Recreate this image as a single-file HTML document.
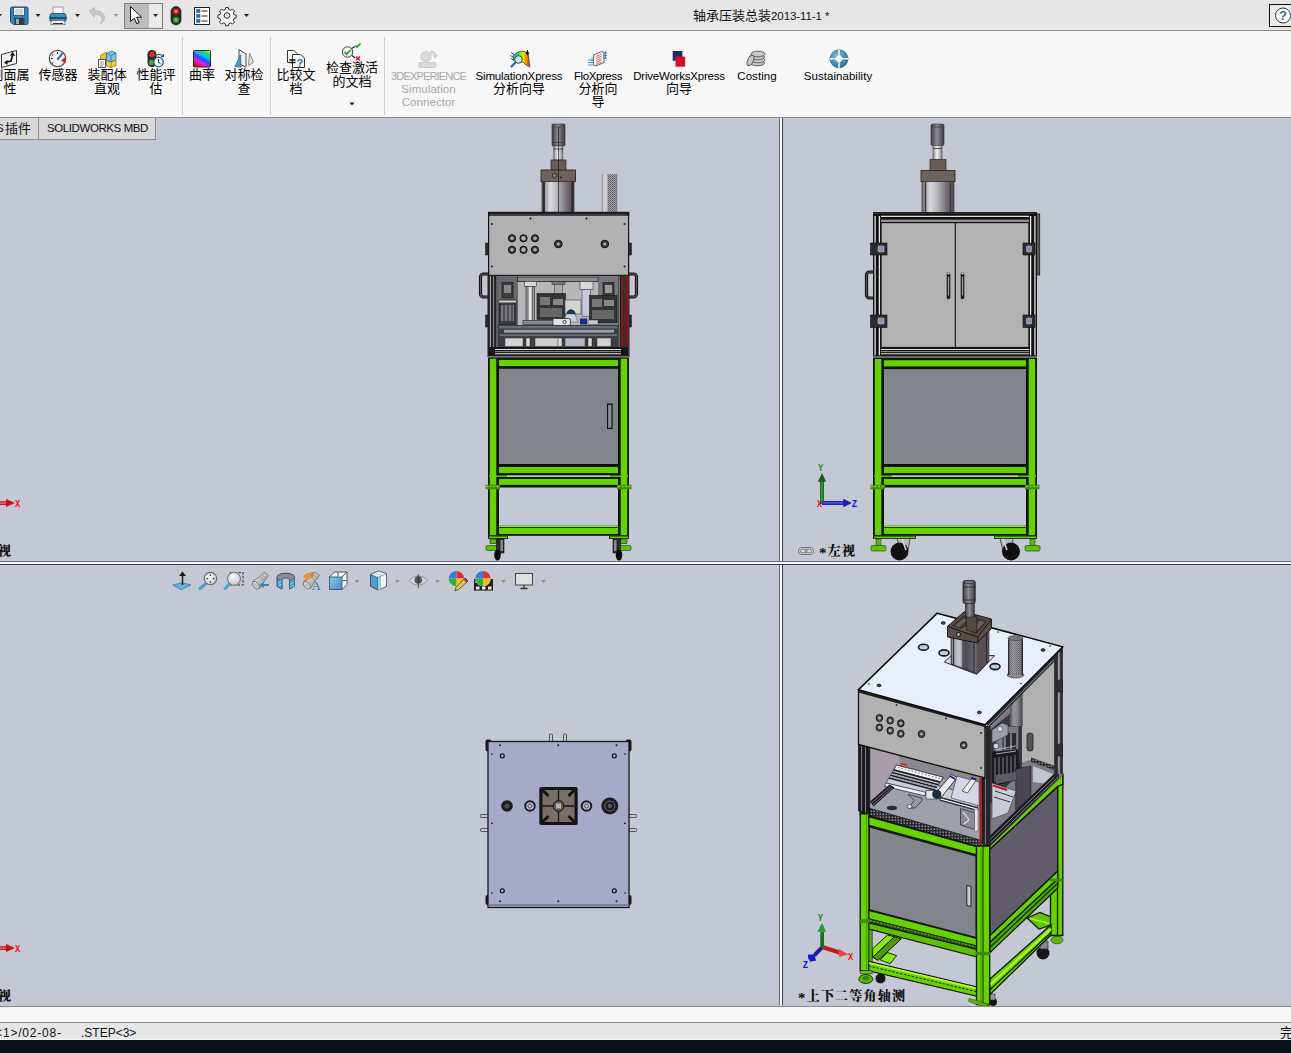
<!DOCTYPE html>
<html lang="zh">
<head>
<meta charset="utf-8">
<title>SOLIDWORKS</title>
<style>
*{box-sizing:border-box;margin:0;padding:0}
html,body{width:1291px;height:1053px;overflow:hidden;background:#c4c8d4;font-family:"Liberation Sans","Noto Sans CJK SC",sans-serif;}
#app{position:relative;width:1291px;height:1053px;overflow:hidden;background:#c4c8d4}
.abs{position:absolute}
#titlebar{left:0;top:0;width:1291px;height:30px;background:#e6e6e6}
#titleline{left:0;top:30px;width:1291px;height:1px;background:#8c8c8c}
#ribbon{left:0;top:31px;width:1291px;height:86px;background:#f7f7f7}
#ribline{left:0;top:117px;width:1291px;height:1px;background:#8a8a8a}
#title{left:693px;top:8px;font-size:13px;line-height:16px;color:#111;white-space:nowrap}
.rb{position:absolute;text-align:center;color:#000;font-size:13px;line-height:13.5px;white-space:nowrap;transform:translateX(-50%)}
.rb.en{font-size:11.5px;line-height:13px}
.rb.en .cn{font-size:13px;line-height:12.5px;letter-spacing:0;display:block}
.rb.dis{color:#a8a8a8}
.vsep{position:absolute;top:37px;width:1px;height:78px;background:#cfcfcf}
.tab{position:absolute;top:118px;height:22px;background:#d9d9d9;border-bottom:1px solid #8a8a8a;border-right:1px solid #8a8a8a;font-size:11.5px;line-height:21px;letter-spacing:-0.41px;color:#111;white-space:nowrap}
#bot1{left:0;top:1006px;width:1291px;height:1px;background:#8a8a8a}
#bot2{left:0;top:1007px;width:1291px;height:15px;background:#f7f7f7}
#bot3{left:0;top:1022px;width:1291px;height:1px;background:#8a8a8a}
#status{left:0;top:1023px;width:1291px;height:17px;background:#e6e6e6;font-size:12px;line-height:17px;color:#111}
#taskbar{left:0;top:1040px;width:1291px;height:13px;background:#0d121b}
.vl{position:absolute;font-family:"Liberation Serif","Noto Serif CJK SC",serif;font-weight:900;font-size:13px;line-height:14px;color:#111;white-space:nowrap;letter-spacing:1.2px}
.st{position:relative;top:2.500px;font-size:15px;line-height:10px}
svg{position:absolute;left:0;top:0;overflow:visible}
</style>
</head>
<body>
<div id="app">
<!--VP-START--><svg width="1291" height="1053" viewBox="0 0 1291 1053"><defs>
<linearGradient id="gNut" x1="0" y1="0" x2="1" y2="0"><stop offset="0" stop-color="#3c3c40"/><stop offset=".45" stop-color="#8c8c92"/><stop offset="1" stop-color="#3a3a3e"/></linearGradient>
<linearGradient id="gRod" x1="0" y1="0" x2="1" y2="0"><stop offset="0" stop-color="#8a8a8e"/><stop offset=".45" stop-color="#f2f2f4"/><stop offset="1" stop-color="#86868a"/></linearGradient>
<linearGradient id="gCyl" x1="0" y1="0" x2="1" y2="0"><stop offset="0" stop-color="#6e6a6c"/><stop offset=".25" stop-color="#dcdce0"/><stop offset=".5" stop-color="#b0b0b6"/><stop offset=".8" stop-color="#6e666c"/><stop offset="1" stop-color="#544c52"/></linearGradient><linearGradient id="gCylI" x1="0" y1="0" x2="1" y2="0"><stop offset="0" stop-color="#8e8e96"/><stop offset=".2" stop-color="#c8c8d0"/><stop offset=".32" stop-color="#9a9aa2"/><stop offset=".36" stop-color="#46464c"/><stop offset=".66" stop-color="#6e6e76"/><stop offset=".7" stop-color="#584e56"/><stop offset="1" stop-color="#5c525a"/></linearGradient>
<linearGradient id="gCol" x1="0" y1="0" x2="1" y2="0"><stop offset="0" stop-color="#4e4e52"/><stop offset=".35" stop-color="#a4a4a8"/><stop offset="1" stop-color="#46464a"/></linearGradient>
<pattern id="pHatch" width="2" height="2" patternUnits="userSpaceOnUse"><rect width="2" height="2" fill="#a4a4a4"/><rect width="1" height="1" fill="#5a5a5a"/><rect x="1" y="1" width="1" height="1" fill="#6e6e6e"/></pattern>
<pattern id="pProf" width="3.300" height="4" patternUnits="userSpaceOnUse"><rect width="3.300" height="4" fill="#1e1e22"/><rect x="1.500" width="1" height="4" fill="#a8a8ac"/></pattern>
<pattern id="pDots" width="3" height="3" patternUnits="userSpaceOnUse"><rect width="3" height="3" fill="#2a2a2c"/><rect x=".5" y=".5" width="1.500" height="1.500" fill="#8a8a8e"/></pattern>
</defs>
<g id="front" shape-rendering="auto">
<!-- cylinder on top -->
<rect x="552" y="124" width="13" height="22" rx="1" fill="url(#gNut)" stroke="#333" stroke-width=".6"/>
<path d="M552.500 127h12M552.500 142.500h12" stroke="#333" stroke-width=".7"/>
<rect x="553.800" y="146" width="9" height="14" fill="url(#gRod)" stroke="#444" stroke-width=".6"/>
<path d="M553.500 149h10" stroke="#333" stroke-width=".8"/>
<rect x="551" y="160" width="15" height="10.500" fill="#6a5c54" stroke="#2a2624" stroke-width=".7"/>
<rect x="541" y="170" width="34.500" height="11.500" fill="#6e625a" stroke="#2a2624" stroke-width=".9"/>
<circle cx="554.500" cy="175.500" r="2.200" fill="#8a7e76" stroke="#1a1816" stroke-width=".8"/>
<circle cx="561" cy="177.500" r="1" fill="#222"/>
<rect x="542" y="181.500" width="32" height="31" fill="url(#gCyl)" stroke="#333" stroke-width=".7"/>
<path d="M543.800 182v30M572.500 182v30" stroke="#2e2a2a" stroke-width="2.200"/><path d="M558.500 127v85" stroke="#1a1a1a" stroke-width=".7"/>
<!-- side column -->
<rect x="602.300" y="174.200" width="14.500" height="38.300" fill="#cdcdcd"/>
<rect x="607.500" y="174.200" width="9.300" height="38.300" fill="url(#pHatch)"/><path d="M602.300 174.200v38M616.800 174.200v38" stroke="#666" stroke-width=".6"/>
<!-- upper panel -->
<rect x="488.600" y="212.400" width="140" height="63" fill="#b1b1b1" stroke="#101010" stroke-width="1.200"/>
<rect x="488" y="212" width="141.200" height="3.700" fill="#1a1a1e"/><path d="M490 214.300h137" stroke="#4a4c56" stroke-width=".8"/>
<g fill="#3a3a3a" stroke="#0e0e0e" stroke-width="1">
<circle cx="512" cy="238.300" r="3.600"/><circle cx="523.500" cy="238.300" r="3.600"/><circle cx="535" cy="238.300" r="3.600"/>
<circle cx="512" cy="249.800" r="3.600"/><circle cx="523.500" cy="249.800" r="3.600"/><circle cx="535" cy="249.800" r="3.600"/>
<circle cx="558.300" cy="244" r="3.800"/><circle cx="604.800" cy="244" r="3.800"/>
</g>
<g fill="#b0b0b0"><circle cx="512" cy="238.300" r="1.800"/><circle cx="523.500" cy="238.300" r="2.200"/><circle cx="535" cy="238.300" r="1.800"/><circle cx="512" cy="249.800" r="1.800"/><circle cx="523.500" cy="249.800" r="2.200"/><circle cx="535" cy="249.800" r="1.800"/><circle cx="558.300" cy="244" r="1.600"/><circle cx="604.800" cy="244" r="1.600"/></g>
<g fill="#1a1a1a"><circle cx="492" cy="224" r="1"/><circle cx="624.500" cy="224" r="1"/><circle cx="492" cy="266.500" r="1"/><circle cx="624.500" cy="266.500" r="1"/><circle cx="530.500" cy="218.500" r="1"/><circle cx="586.500" cy="218.500" r="1"/></g>
<!-- side hinges on panel -->
<rect x="485.500" y="243" width="3" height="12" fill="#2a2a2c" stroke="#111" stroke-width=".5"/>
<rect x="628.500" y="243" width="3" height="12" fill="#2a2a2c" stroke="#111" stroke-width=".5"/>
<!-- handles -->
<path d="M488 274h-4.500a3 3 0 0 0-3 3v17a3 3 0 0 0 3 3h4.500" fill="none" stroke="#141414" stroke-width="3.200"/>
<path d="M488 274h-4.500a3 3 0 0 0-3 3v17a3 3 0 0 0 3 3h4.500" fill="none" stroke="#5a5a5e" stroke-width="1.100"/>
<path d="M629 274h4.500a3 3 0 0 1 3 3v17a3 3 0 0 1-3 3h-4.500" fill="none" stroke="#141414" stroke-width="3.200"/>
<path d="M629 274h4.500a3 3 0 0 1 3 3v17a3 3 0 0 1-3 3h-4.500" fill="none" stroke="#5a5a5e" stroke-width="1.100"/>
<rect x="485.500" y="315" width="3" height="12" fill="#2a2a2c" stroke="#111" stroke-width=".5"/>
<rect x="628.500" y="315" width="3" height="12" fill="#2a2a2c" stroke="#111" stroke-width=".5"/>
<!-- interior -->
<rect x="488" y="275.500" width="141" height="81" fill="#b7b7ba"/>
<rect x="488" y="275.500" width="10" height="81" fill="url(#pProf)"/>
<rect x="618" y="275.500" width="11" height="81" fill="url(#pProf)"/>
<rect x="621.800" y="275.500" width="1.600" height="80" fill="#a80c0c"/><rect x="623.400" y="275.500" width="2.800" height="80" fill="#3a3030"/><rect x="626.200" y="275.500" width="1.900" height="80" fill="#9a0c0c"/>
<rect x="498" y="276" width="20" height="50" fill="#6a6a6e"/>
<rect x="598" y="276" width="20" height="50" fill="#77777b"/>
<rect x="517.500" y="277" width="80.500" height="4.500" fill="#8c8c90" stroke="#222" stroke-width=".8"/>
<rect x="502" y="282.500" width="11" height="15.500" fill="#3c3c3e" stroke="#111" stroke-width=".6"/>
<rect x="504" y="285" width="7" height="8" fill="#8a8a8a"/>
<rect x="499" y="300" width="17" height="25" fill="#3a3a3e" stroke="#111" stroke-width=".6"/>
<rect x="501" y="305" width="13" height="16" fill="#77777b"/><path d="M504 305v16M508 305v16M512 305v16" stroke="#2a2a2e" stroke-width="1"/><rect x="499" y="300.500" width="17" height="2" fill="#d8d0c8"/>
<rect x="603" y="282.500" width="11" height="15.500" fill="#3c3c3e" stroke="#111" stroke-width=".6"/>
<rect x="605" y="285" width="7" height="8" fill="#9a9a9a"/>
<rect x="524.500" y="281.500" width="12" height="5" fill="#d8d8d8" stroke="#333" stroke-width=".6"/>
<rect x="526" y="286.500" width="8.500" height="34.500" fill="url(#gRod)" stroke="#333" stroke-width=".6"/>
<path d="M528 287v34M532.500 287v34" stroke="#222" stroke-width=".6"/>
<rect x="580" y="281.500" width="13" height="8" fill="#d8d8d8" stroke="#333" stroke-width=".6"/>
<rect x="582" y="289.500" width="8.500" height="27" fill="#c6c6e0" stroke="#444" stroke-width=".6"/>
<rect x="552" y="281.500" width="13" height="3" fill="#777" stroke="#222" stroke-width=".5"/>
<rect x="554.500" y="284.500" width="8" height="10" fill="#aaa" stroke="#333" stroke-width=".5"/>
<rect x="537" y="293.500" width="28.500" height="26" fill="#343436" stroke="#111" stroke-width=".6"/>
<rect x="540" y="297" width="10" height="8" fill="#777"/><rect x="553" y="299" width="10" height="6" fill="#888"/><rect x="540" y="308" width="22" height="9" fill="#666"/>
<rect x="589.500" y="295.500" width="27.500" height="27" fill="#343436" stroke="#111" stroke-width=".6"/>
<rect x="592" y="299" width="10" height="8" fill="#777"/><rect x="604" y="300" width="10" height="6" fill="#888"/><rect x="592" y="310" width="22" height="9" fill="#666"/>
<rect x="565" y="300" width="16" height="14" fill="#d2d2d2" stroke="#444" stroke-width=".6"/>
<circle cx="571" cy="314" r="4.200" fill="#14364e" stroke="#0a1a26" stroke-width=".6"/>
<path d="M566 314l-2 8h14l-3-8z" fill="#c8d0e4" stroke="#556" stroke-width=".5"/>
<rect x="552.500" y="318.500" width="18" height="7" rx="2" fill="#e2e2e2" stroke="#222" stroke-width=".8"/>
<circle cx="564.500" cy="322" r="1.600" fill="#fff" stroke="#111" stroke-width=".8"/>
<rect x="580" y="318.500" width="7" height="6" fill="#1a2a8a"/><rect x="588" y="320" width="10" height="4.500" fill="#c8c8c8" stroke="#333" stroke-width=".5"/>
<rect x="523" y="320.500" width="30" height="4" fill="#8a8a8e" stroke="#222" stroke-width=".6"/>
<rect x="498" y="325" width="120" height="12" fill="#3c3e44"/>
<rect x="499" y="326" width="118" height="2.500" fill="#6a6c74"/>
<rect x="504" y="329.800" width="110" height="2.800" fill="#9c9eb4"/>
<rect x="500" y="334.300" width="117" height="1.800" fill="#70727a"/>
<rect x="498" y="337" width="120" height="10" fill="#3e3e42"/>
<rect x="505" y="338" width="18" height="8.500" fill="#d4d4d4" stroke="#333" stroke-width=".5"/>
<rect x="535" y="338" width="24" height="8.500" fill="#cfcfcf" stroke="#333" stroke-width=".5"/>
<rect x="565" y="338" width="20" height="8.500" fill="#b4b8c4" stroke="#333" stroke-width=".5"/>
<rect x="597" y="338" width="14" height="8.500" fill="#d4d4d4" stroke="#333" stroke-width=".5"/>
<rect x="526" y="338" width="4" height="8.500" fill="#ddd" stroke="#222" stroke-width=".5"/><rect x="558" y="338" width="4" height="8.500" fill="#ddd" stroke="#222" stroke-width=".5"/><rect x="588" y="338" width="4" height="8.500" fill="#ddd" stroke="#222" stroke-width=".5"/>
<rect x="489" y="347" width="139" height="9" fill="#161618"/>
<path d="M495 349.500h126M495 353.800h126" stroke="#e6e6e6" stroke-width="1.100"/><path d="M495 351.600h126" stroke="#9a9a9a" stroke-width=".9"/>
<rect x="488" y="275.500" width="141" height="81" fill="none" stroke="#1e1e1e" stroke-width="1"/>
<!-- green frame -->
<rect x="488" y="355" width="141" height="1.200" fill="#1a1a1a"/>
<rect x="488" y="356" width="141" height="2" fill="#6c7078"/>
<rect x="488" y="357.7" width="141" height="178.09999999999997" fill="#0c1602"/>
<rect x="499" y="487.500" width="119" height="38.200" fill="#c4c8d4"/>
<rect x="489.8" y="358.7" width="6.500" height="176.3" fill="#68d200"/>
<rect x="620.7" y="358.7" width="6.500" height="176.3" fill="#68d200"/>
<rect x="499" y="359.9" width="119" height="6.200" fill="#68d200"/>
<rect x="499" y="368.8" width="119" height="95.2" fill="#82868c"/>
<rect x="499" y="467" width="119" height="6.100" fill="#68d200"/>
<rect x="507" y="475.300" width="103" height="1.600" fill="#d4d8e0"/>
<rect x="489" y="475.500" width="18" height="1.400" fill="#68d200"/>
<rect x="610" y="475.500" width="18" height="1.400" fill="#68d200"/>
<rect x="499" y="478.900" width="119" height="6" fill="#68d200"/>
<rect x="499" y="525.700" width="119" height="1.300" fill="#8ee62a"/>
<rect x="499" y="527.800" width="119" height="6.200" fill="#68d200"/>
<path d="M485.5 487h14.500M617 487h14.500" stroke="#3f8a00" stroke-width="4.500"/>
<path d="M486 486.500h13M618 486.500h13" stroke="#7ae010" stroke-width="1.500" stroke-dasharray="2 1.500"/>
<rect x="607" y="403.500" width="5.600" height="25.500" fill="#0c0c0c"/><rect x="608.200" y="404.800" width="3.200" height="23" fill="#8e9298"/>
<!-- feet -->
<rect x="488" y="535.800" width="20" height="3" fill="#0c1602"/><rect x="489" y="536.500" width="18" height="1.500" fill="#68d200"/>
<rect x="609" y="535.800" width="20" height="3" fill="#0c1602"/><rect x="610" y="536.500" width="18" height="1.500" fill="#68d200"/>
<rect x="490" y="539" width="6.500" height="4.500" fill="#5ab800" stroke="#16280a" stroke-width=".6"/>
<rect x="486" y="545.500" width="14.500" height="5" rx="1.500" fill="#5cc400" stroke="#284a0a" stroke-width=".7"/>
<rect x="620.500" y="539" width="6.500" height="4.500" fill="#5ab800" stroke="#16280a" stroke-width=".6"/>
<rect x="616.500" y="545.500" width="14.500" height="5" rx="1.500" fill="#5cc400" stroke="#284a0a" stroke-width=".7"/>
<rect x="496.500" y="539" width="7.500" height="14" fill="#2a2a2c" stroke="#111" stroke-width=".6"/><rect x="500.500" y="540" width="2.500" height="11" fill="#8a8890"/>
<ellipse cx="497.500" cy="555" rx="3.300" ry="5.500" fill="#0c0c0c"/>
<rect x="613" y="539" width="7.500" height="14" fill="#2a2a2c" stroke="#111" stroke-width=".6"/><rect x="614" y="540" width="2.500" height="11" fill="#8a8890"/>
<ellipse cx="619" cy="555" rx="3.300" ry="5.500" fill="#0c0c0c"/>
</g>
<g id="left">
<rect x="931" y="124" width="13" height="21.500" rx="1.500" fill="url(#gNut)" stroke="#333" stroke-width=".6"/>
<path d="M931.500 127h12" stroke="#333" stroke-width=".7"/>
<rect x="933" y="145.500" width="9" height="14.500" fill="url(#gRod)" stroke="#444" stroke-width=".6"/>
<path d="M933 148.500h9" stroke="#333" stroke-width=".8"/>
<rect x="930" y="159.500" width="16" height="11" fill="#6a5c54" stroke="#2a2624" stroke-width=".7"/>
<rect x="921" y="170.500" width="34" height="11" fill="#6e625a" stroke="#2a2624" stroke-width=".9"/>
<rect x="922" y="181.500" width="32" height="31" fill="url(#gCyl)" stroke="#333" stroke-width=".7"/>
<path d="M925.500 182v30M950.500 182v30" stroke="#3a3434" stroke-width="1.200"/>
<!-- cabinet -->
<rect x="1036" y="214" width="3.700" height="61" fill="#5a5a5e" stroke="#1a1a1a" stroke-width=".8"/>
<rect x="873" y="212" width="164" height="144.500" fill="#121212"/>
<path d="M873.500 213.200h163" stroke="#3c3e46" stroke-width="1"/>
<path d="M875.100 216v140M1034.900 216v140" stroke="#bcbcbc" stroke-width="1.600"/>
<path d="M879.400 216v140M1030.600 216v140" stroke="#e8e8e8" stroke-width="1.300"/>
<path d="M881 216.400h148" stroke="#e0e0e0" stroke-width="1.200"/>
<rect x="881" y="219.600" width="148" height="2.400" fill="#909090"/>
<rect x="881.700" y="223.200" width="146.600" height="123.700" fill="#b2b2b2"/>
<path d="M955.300 223v124" stroke="#111" stroke-width="1.100"/>
<path d="M881 349.500h148M881 353.700h148" stroke="#e4e4e4" stroke-width="1.100"/>
<path d="M881 351.600h148" stroke="#9a9a9a" stroke-width="1"/>
<!-- hinges -->
<g fill="#2c2c30" stroke="#0c0c0c" stroke-width=".6">
<rect x="870.500" y="243" width="16.500" height="12"/><rect x="870.500" y="315" width="16.500" height="12.500"/>
<rect x="1023" y="243" width="12" height="12"/><rect x="1023" y="315" width="12" height="12.500"/>
</g>
<g fill="#8a90b0" stroke="#ccd" stroke-width=".5"><rect x="878" y="246" width="6" height="6" rx="1"/><rect x="878" y="318" width="6" height="6" rx="1"/><rect x="1026.500" y="246" width="5" height="6" rx="1"/><rect x="1026.500" y="318" width="5" height="6" rx="1"/></g>
<!-- left handle -->
<path d="M873 272h-3.500a3 3 0 0 0-3 3v20a3 3 0 0 0 3 3h3.500" fill="none" stroke="#141414" stroke-width="3.200"/>
<path d="M873 272h-3.500a3 3 0 0 0-3 3v20a3 3 0 0 0 3 3h3.500" fill="none" stroke="#5a5a5e" stroke-width="1"/>
<!-- door handles -->
<g stroke="#1a1a1a" stroke-width="3.600" stroke-linecap="round"><path d="M948.500 274v23.500M962.500 274v23.500"/></g>
<g stroke="#a0a0a4" stroke-width="1.200" stroke-linecap="round"><path d="M948.500 277v18M962.500 277v18"/></g>
<circle cx="948.500" cy="273.500" r="1.100" fill="#e4e4e4"/><circle cx="962.500" cy="273.500" r="1.100" fill="#e4e4e4"/>
<!-- green frame -->
<rect x="873" y="355.3" width="164" height="1.200" fill="#1a1a1a"/>
<rect x="873" y="356.3" width="164" height="2" fill="#6c7078"/>
<rect x="873" y="358.0" width="164" height="177.79999999999995" fill="#0c1602"/>
<rect x="884" y="487.500" width="142" height="38.200" fill="#c4c8d4"/>
<rect x="874.8" y="359.0" width="6.500" height="176.0" fill="#68d200"/>
<rect x="1028.7" y="359.0" width="6.500" height="176.0" fill="#68d200"/>
<rect x="884" y="360.2" width="142" height="6.200" fill="#68d200"/>
<rect x="884" y="369.1" width="142" height="94.89999999999999" fill="#82868c"/>
<rect x="884" y="467" width="142" height="6.100" fill="#68d200"/>
<rect x="892" y="475.300" width="126" height="1.600" fill="#d4d8e0"/>
<rect x="874" y="475.500" width="18" height="1.400" fill="#68d200"/>
<rect x="1018" y="475.500" width="18" height="1.400" fill="#68d200"/>
<rect x="884" y="478.900" width="142" height="6" fill="#68d200"/>
<rect x="884" y="525.700" width="142" height="1.300" fill="#8ee62a"/>
<rect x="884" y="527.800" width="142" height="6.200" fill="#68d200"/>
<path d="M870.5 487h14.500M1025 487h14.500" stroke="#3f8a00" stroke-width="4.500"/>
<path d="M871 486.500h13M1026 486.500h13" stroke="#7ae010" stroke-width="1.500" stroke-dasharray="2 1.500"/>
<!-- feet and wheels -->
<rect x="873" y="535.800" width="43" height="3" fill="#0c1602"/><rect x="874" y="536.500" width="41" height="1.500" fill="#68d200"/>
<rect x="994" y="535.800" width="43" height="3" fill="#0c1602"/><rect x="995" y="536.500" width="41" height="1.500" fill="#68d200"/>
<rect x="876" y="539" width="5" height="6.500" fill="#5ab800" stroke="#16280a" stroke-width=".5"/>
<rect x="871" y="545.500" width="15" height="5.500" rx="1.500" fill="#5cc400" stroke="#284a0a" stroke-width=".7"/>
<rect x="1030" y="539" width="5" height="6.500" fill="#5ab800" stroke="#16280a" stroke-width=".5"/>
<rect x="1025" y="545.500" width="15" height="5.500" rx="1.500" fill="#5cc400" stroke="#284a0a" stroke-width=".7"/>
<path d="M897 538.500h13l-2 12h-8z" fill="#b8b8b8" stroke="#222" stroke-width=".7"/>
<circle cx="899.500" cy="551.500" r="9" fill="#101010"/>
<path d="M902 539l4 11" stroke="#ddd" stroke-width="1.500"/>
<path d="M1000 538.500h13l-1 12h-9z" fill="#b8b8b8" stroke="#222" stroke-width=".7"/>
<circle cx="1011" cy="551.500" r="9" fill="#101010"/>
<path d="M1003 539l4 11" stroke="#ddd" stroke-width="1.500"/>
<!-- triad -->
<text x="819.600" y="507" font-family="Liberation Mono, monospace" font-weight="bold" font-size="11" fill="#f01010" text-anchor="middle" textLength="5" lengthAdjust="spacingAndGlyphs">X</text>
<rect x="820" y="481" width="4" height="23" fill="#1e6e22"/><rect x="821.300" y="481" width="1.300" height="22" fill="#4a9a4a"/>
<path d="M817.800 481.800l4.200-8.800 4.200 8.800z" fill="#1a5e1e"/>
<rect x="822" y="501" width="22" height="4" fill="#2222c8"/><rect x="823" y="502.300" width="21" height="1.300" fill="#5a5ae0"/>
<path d="M843.300 498.800l8.600 4.200-8.600 4.200z" fill="#1a1ab8"/>
<text x="820.600" y="470.700" font-family="Liberation Mono, monospace" font-weight="bold" font-size="11" fill="#128a22" text-anchor="middle" textLength="5.300" lengthAdjust="spacingAndGlyphs">Y</text>
<text x="854.500" y="506.700" font-family="Liberation Mono, monospace" font-weight="bold" font-size="11" fill="#1414f0" text-anchor="middle" textLength="5.300" lengthAdjust="spacingAndGlyphs">Z</text>
<!-- link icon -->
<rect x="798.500" y="547.500" width="15" height="7" rx="3.500" fill="#d8d8dc" stroke="#6a6460" stroke-width=".9"/>
<rect x="800.500" y="549.300" width="6.500" height="3.400" rx="1.700" fill="none" stroke="#6a6460" stroke-width=".8"/><rect x="805" y="549.300" width="6.500" height="3.400" rx="1.700" fill="none" stroke="#6a6460" stroke-width=".8"/>
</g>
<g id="top">
<!-- pins -->
<g fill="#c8c8c8" stroke="#222" stroke-width=".7">
<rect x="549.500" y="734" width="3" height="8" rx="1"/><rect x="563.500" y="734" width="3" height="8" rx="1"/>
<rect x="480.500" y="814.500" width="8" height="3" rx="1"/><rect x="480.500" y="828.500" width="8" height="3" rx="1"/>
<rect x="629" y="814.500" width="7.500" height="3" rx="1"/><rect x="629" y="828.500" width="7.500" height="3" rx="1"/>
</g>
<g fill="#1a1a1a"><rect x="485.500" y="739.500" width="6" height="12" rx="2"/><rect x="625.500" y="739.500" width="6" height="12" rx="2"/><rect x="485.500" y="895" width="6" height="10" rx="2"/><rect x="625.500" y="895" width="6" height="10" rx="2"/></g>
<rect x="488" y="741.500" width="141" height="166" fill="#a6aac8" stroke="#15151c" stroke-width="1.300"/>
<path d="M488 905h141" stroke="#777" stroke-width="1.500"/>
<rect x="539.300" y="787" width="38.400" height="38" rx="2" fill="#141414"/>
<rect x="542.500" y="790" width="32" height="32" fill="#7a6e66"/>
<path d="M558.500 790v32M542.500 806h32" stroke="#141414" stroke-width="1.300"/>
<path d="M542.500 790l6 6M574.500 790l-6 6M542.500 822l6-6M574.500 822l-6-6" stroke="#141414" stroke-width="3"/>
<circle cx="558.500" cy="806" r="5.500" fill="#5a5550" stroke="#141414" stroke-width="1"/>
<rect x="556" y="803.500" width="5" height="5" fill="#b4b4b8"/>
<circle cx="507" cy="806" r="5.800" fill="#1c1c20"/><circle cx="507" cy="806" r="2.500" fill="#4a4a50"/>
<circle cx="530" cy="806" r="4.800" fill="#b4b8d0" stroke="#1a1a1e" stroke-width="2"/><circle cx="530" cy="806" r="2" fill="none" stroke="#333" stroke-width=".7"/>
<circle cx="586.500" cy="806" r="4.800" fill="#b4b8d0" stroke="#1a1a1e" stroke-width="2"/><circle cx="586.500" cy="806" r="2" fill="none" stroke="#333" stroke-width=".7"/>
<circle cx="609.800" cy="806" r="8.500" fill="#1c1c20"/><circle cx="609.800" cy="806" r="5" fill="none" stroke="#6a6a72" stroke-width="1"/><circle cx="609.800" cy="806" r="2.300" fill="#55555c"/>
<g fill="#a6aac8" stroke="#15151c" stroke-width="1.200"><circle cx="502.300" cy="755.800" r="2"/><circle cx="614.300" cy="755.800" r="2"/><circle cx="502.300" cy="890.800" r="2"/><circle cx="614.300" cy="890.800" r="2"/></g>
<g fill="#15151c"><circle cx="500" cy="745.300" r="1"/><circle cx="558.300" cy="745.300" r="1"/><circle cx="616.500" cy="745.300" r="1"/><circle cx="500" cy="901.300" r="1"/><circle cx="558.300" cy="901.300" r="1"/><circle cx="616.500" cy="901.300" r="1"/><circle cx="492" cy="823.300" r=".9"/><circle cx="625" cy="823.300" r=".9"/><circle cx="492" cy="754" r=".8"/><circle cx="625" cy="754" r=".8"/><circle cx="492" cy="893" r=".8"/><circle cx="625" cy="893" r=".8"/></g>
<!-- left-edge triads -->
</g>
<g id="iso">
<!-- back/inside of lower frame seen through -->
<path d="M872.600 948.700l15-13.700 6.800 1.800-21.800 20.500z" fill="#84ec08" stroke="#0c1602" stroke-width="1"/>
<path d="M894.400 936.800l6.900 2.100-23.100 21.400-5.600-3z" fill="#4f9a00" stroke="#0c1602" stroke-width="1"/>
<path d="M880 959.800l7.600-7.200 9 3-6.400 8.100z" fill="#84ec08" stroke="#0c1602" stroke-width=".9"/>
<path d="M1027 918l13-5.500 11 4.500v8l-12 4z" fill="#63c400" stroke="#0c1602" stroke-width="1.200"/>
<path d="M1030 918.500l19 5" stroke="#a8f020" stroke-width="1.500"/>
<!-- wheels/feet back -->
<circle cx="1043" cy="953" r="6.500" fill="#161616"/><path d="M1040 941h8v8h-8z" fill="#888" stroke="#222" stroke-width=".6"/>
<ellipse cx="1057" cy="940" rx="6" ry="3.800" fill="#5ab800" stroke="#284a0a" stroke-width=".7"/>
<circle cx="880.500" cy="978.500" r="5" fill="#161616"/>
<circle cx="993" cy="1002" r="4" fill="#161616"/><rect x="989" y="994" width="6" height="6" fill="#999" stroke="#222" stroke-width=".5"/>
<!-- back-right leg -->
<path d="M1050.500 775h12.300v160.500h-12.300z" fill="#68d200" stroke="#0c1602" stroke-width="1.300"/>
<path d="M1057.500 786v149" stroke="#0c1602" stroke-width="1.200"/>
<!-- side bottom beam -->
<path d="M989.700 979.300l61.300-54.500v10.200l-61.300 59.600z" fill="#68d200" stroke="#0c1602" stroke-width="1.300"/>
<path d="M989.700 985l61.300-56" stroke="#b4f830" stroke-width="2.200"/>
<path d="M989.700 990l61.300-57.500" stroke="#0c1602" stroke-width="1.200"/>
<!-- side door -->
<path d="M989.300 849.700l68.400-63.300v84.600l-68 64.800z" fill="#605c6c" stroke="#0c1602" stroke-width="1.300"/>
<!-- side beams under door -->
<path d="M989.700 935.800l68.200-64.800v7.700l-68.200 64z" fill="#68d200" stroke="#0c1602" stroke-width="1.200"/>
<path d="M989.700 942.700l68.200-64v9.300l-68.200 64.900z" fill="#4faa00" stroke="#0c1602" stroke-width="1.200"/>
<path d="M989.700 947.500l68.200-64.500" stroke="#16280a" stroke-width="1.200"/>
<!-- side top green beam -->
<path d="M986.800 848l76-73.600v10l-5.100 2-68.400 63.300z" fill="#68d200" stroke="#0c1602" stroke-width="1.300"/>
<!-- upper cabinet: interior floor + walls -->
<path d="M858.500 744.500l124.500 33.500v66l-124.500-36z" fill="#9ea2a8"/>
<path d="M869.700 748l30 7.600v30l-30 22z" fill="#a89ea8"/>
<path d="M899.600 755.600l83 22v12l-83-22z" fill="#8c8890"/>
<!-- internals (rails etc.) -->
<path d="M886 783l10.500-18 47 12.500-6 8 28 8 12 4v10l-14-4-48-13z" fill="#c9cdda" stroke="#333" stroke-width=".7"/>
<path d="M896.500 765l46.500 12.200-2.500 4.500-46.500-12.200z" fill="#f4f4f8" stroke="#222" stroke-width=".7"/>
<path d="M898 767.500l43 11.300" stroke="#55555a" stroke-width=".8" stroke-dasharray="1.500 2"/>
<path d="M893.500 770l46.500 12.300M892 772.500l46.500 12.300M890.500 775.300l46.500 12.300M889 778l46.500 12.300" stroke="#1e1e22" stroke-width="1.500"/>
<path d="M891.300 773.900l46.500 12.300M889.800 776.600l46.500 12.300" stroke="#9a9ca8" stroke-width="1"/>
<path d="M886 783l40 9.300-1.500 3.500-40-9.500z" fill="#eef0f8" stroke="#222" stroke-width=".7"/><path d="M940 797.500l38 10.500v3l-38-10.500z" fill="#eef0f8" stroke="#222" stroke-width=".7"/>
<path d="M901 763.500l6 1.600M899.500 765.500l5 1.400" stroke="#c01818" stroke-width="1.200"/>
<path d="M870 801.500l19.500-17 5 3-21 19z" fill="#1c1c20"/>
<path d="M871.500 803l19-16.500M873 805l19-17" stroke="#9a9aa0" stroke-width=".7"/>
<path d="M908 794.500l14 3.500v3l-7 7h-6.500l5.500-7.500z" fill="#9a94a0" stroke="#222" stroke-width=".7"/>
<ellipse cx="909.500" cy="806.500" rx="2.600" ry="2" fill="#d8d8dc" stroke="#222" stroke-width=".6"/>
<path d="M926 790.500h9l2 8.500h-11z" fill="#e4e4e6" stroke="#222" stroke-width=".6"/>
<path d="M933.500 795.500l18-21 5.500 3-17 21.500z" fill="#ececf0" stroke="#1a1a1a" stroke-width=".8"/>
<path d="M950 776l5 3" stroke="#1a1a8a" stroke-width="2"/>
<circle cx="936.800" cy="794.300" r="4.100" fill="#16303e" stroke="#0a141c" stroke-width=".8"/>
<path d="M957 776l22 6v24l-6-2-22-6z" fill="#d4d8e6" stroke="#333" stroke-width=".6"/>
<path d="M962 791l10-13 4.500 1.500-9 13.500z" fill="#f0f0f4" stroke="#222" stroke-width=".7"/>
<path d="M971 778l5 1.500" stroke="#1a1a8a" stroke-width="2"/>
<path d="M938 797l40 11M940 800l38 10.500" stroke="#222" stroke-width="1"/>
<path d="M960.500 808.500l14 4v17l-14-4.500z" fill="#8c8a94" stroke="#222" stroke-width=".7"/>
<path d="M963 812l6 8-5 4" stroke="#e0e0e4" stroke-width="1.200" fill="none"/>
<path d="M974.500 809h3.500v22h-3.500z" fill="#e4e4e4" stroke="#444" stroke-width=".4"/>
<ellipse cx="892" cy="808" rx="5" ry="2.200" fill="#2a2a2e"/>
<!-- dotted rim front -->
<path d="M860 805.500l125 36v8l-125-35z" fill="url(#pDots)" stroke="#141414" stroke-width=".8"/>
<path d="M860 813.500l125 35.500" stroke="#141414" stroke-width="2"/>
<!-- right side interior -->
<path d="M990 727l72.800-77v125l-72.800 72z" fill="#7c7a84"/>
<path d="M1022 694l32-32v104l-22-7-10 4z" fill="#b0b0b0"/>
<path d="M990 730l32-26v66l-32 34z" fill="#3a383e"/>
<path d="M996 742l20-18v20l-20 20z" fill="#7e828a"/>
<path d="M1003 726h16v26h-16z" fill="#747880" stroke="#1a1a1a" stroke-width=".8"/>
<path d="M1006 733h4v16h-4zM1012 733h4v16h-4z" fill="#2a2a2e"/>
<path d="M992 730l10-7 6 2v10l-16 8z" fill="#9a9ea6" stroke="#222" stroke-width=".5"/>
<circle cx="1000" cy="729" r="2.500" fill="#e4e4e8" stroke="#333" stroke-width=".5"/>
<circle cx="996" cy="746" r="2.800" fill="#d8d8dc" stroke="#222" stroke-width=".6"/>
<path d="M992 752l26-3 3 30-29 8z" fill="#1c1c20"/>
<path d="M995 758v24M999 757v24M1003 757v24M1007 756v24M1011 756v24M1015 755v24" stroke="#86868e" stroke-width=".9"/>
<path d="M994 750l22-4M996 754l20-3" stroke="#c8c8cc" stroke-width=".8"/>
<rect x="1027" y="733" width="6" height="18" rx="2.500" fill="#55555a" stroke="#1a1a1a" stroke-width=".8"/>
<path d="M1015.700 769l15.300-3v30l-15.300 14z" fill="#4a4654" stroke="#1a1a1a" stroke-width=".6"/>
<path d="M996 775l20-3v8l-20 4z" fill="#5a5c64"/>
<path d="M992 783l24 8-8 22-16 6z" fill="#c8ccd8" stroke="#333" stroke-width=".6"/>
<path d="M993 785.500l14 4.500" stroke="#c01818" stroke-width="2.200"/>
<path d="M995 791l18 6M994 797l16 5" stroke="#222" stroke-width=".9"/>
<path d="M1031 757.500l24 8.500v4.500l-24-8.500z" fill="url(#pDots)"/>
<path d="M1033 766l20 8-4 10-16-2z" fill="#c0c4cc"/>
<!-- diagonal side rail -->
<path d="M989.600 836l69.400-67v9l-69.400 68.500z" fill="#1a1a1e"/>
<path d="M990 839.500l68-66M990 843.500l68-66.500" stroke="#a8a8ae" stroke-width=".8"/>
<!-- column through side -->
<rect x="1009.800" y="676" width="12.800" height="50" fill="url(#gCol)"/>
<rect x="1013" y="676" width="6" height="50" fill="url(#pHatch)" opacity=".5"/>
<!-- corner post + red strip -->
<path d="M983 726h7.500v120h-7.500z" fill="#26262a"/>
<path d="M985.500 728v116" stroke="#8a8a8e" stroke-width=".8"/>
<rect x="979.500" y="778" width="2.200" height="66" fill="#b01818"/>
<path d="M982.500 778v66" stroke="#1a1a1a" stroke-width="1.500"/>
<!-- side top frame of cabinet -->
<path d="M986 724l76.800-77.500v6.500l-73.800 74.500z" fill="#2a2a2e"/>
<path d="M988 726l73.500-74" stroke="#b4b4b8" stroke-width=".8"/>
<path d="M1056 655v122" stroke="#2a2a2e" stroke-width="3.500"/>
<path d="M1061.500 650v124" stroke="#2a2a2e" stroke-width="2.500"/>
<path d="M1058.800 652v122" stroke="#a4a4a8" stroke-width="1.200"/>
<rect x="1058" y="680" width="4.500" height="12" fill="#333" stroke="#111" stroke-width=".5"/><rect x="1058" y="744" width="4.500" height="12" fill="#333" stroke="#111" stroke-width=".5"/>
<!-- left post -->
<path d="M858.500 744.500l11.200 3v66.500l-11.200-3z" fill="#1c1c20" stroke="#0c0c0c" stroke-width=".7"/><path d="M861.500 746v65M865.500 747v65" stroke="#8a8a90" stroke-width=".9"/>
<!-- front panel -->
<path d="M858.500 690l126.500 34.700v53.300l-126.500-33.500z" fill="#b1b1b1" stroke="#0e0e0e" stroke-width="1.300"/>
<path d="M858.500 691.500l126.500 34.500" stroke="#1c1c1c" stroke-width="2.200"/>
<g fill="#4a4a4c" stroke="#111" stroke-width=".9">
<ellipse cx="879.400" cy="718" rx="3.300" ry="3.600"/><ellipse cx="890.200" cy="720.500" rx="3.300" ry="3.600"/><ellipse cx="900.800" cy="723.300" rx="3.300" ry="3.600"/>
<ellipse cx="879.400" cy="727.500" rx="3.300" ry="3.600"/><ellipse cx="890.200" cy="730.600" rx="3.300" ry="3.600"/><ellipse cx="900.800" cy="733.700" rx="3.300" ry="3.600"/>
<ellipse cx="921.500" cy="734" rx="3.300" ry="3.600"/><ellipse cx="963.700" cy="745.200" rx="3.300" ry="3.600"/>
</g>
<g fill="#b8b8b8"><circle cx="879.400" cy="718" r="1.500"/><circle cx="890.200" cy="720.500" r="1.500"/><circle cx="900.800" cy="723.300" r="1.500"/><circle cx="879.400" cy="727.500" r="1.500"/><circle cx="890.200" cy="730.600" r="1.500"/><circle cx="900.800" cy="733.700" r="1.500"/><circle cx="921.500" cy="734" r="1.300"/><circle cx="963.700" cy="745.200" r="1.300"/></g>
<g fill="#222"><circle cx="896.500" cy="705" r=".9"/><circle cx="923.500" cy="703.500" r=".9"/><circle cx="946" cy="718.500" r=".9"/><circle cx="981" cy="733" r=".9"/><circle cx="981" cy="768" r=".9"/></g>
<!-- top plate -->
<path d="M937.200 613.200l125.600 33.700-77.800 77.800-126.500-35z" fill="#e9eefc" stroke="#0a0a0a" stroke-width="1.500"/>
<g fill="#c4c8d4" stroke="#16161a" stroke-width="1.600"><ellipse cx="923.500" cy="647.300" rx="5" ry="3"/><ellipse cx="944" cy="652.900" rx="5" ry="3"/><ellipse cx="995" cy="666.600" rx="5" ry="3"/></g>
<g fill="#4a4c54" stroke="#16161a" stroke-width=".9"><ellipse cx="943.200" cy="623" rx="2" ry="1.300"/><ellipse cx="1043" cy="650" rx="2" ry="1.300"/><ellipse cx="879" cy="685.400" rx="2" ry="1.300"/><ellipse cx="979.400" cy="712.400" rx="2" ry="1.300"/></g>
<g fill="#222"><circle cx="869" cy="684" r=".8"/><circle cx="1021" cy="683.500" r=".8"/><circle cx="1050" cy="646" r=".8"/><circle cx="998" cy="632" r=".8"/></g>
<!-- column on top -->
<ellipse cx="1015.500" cy="675" rx="8.500" ry="3" fill="#8a8a90" stroke="#333" stroke-width=".6"/>
<rect x="1008" y="638" width="15" height="37" fill="url(#gCol)"/>
<rect x="1010" y="640" width="11" height="35" fill="url(#pHatch)" opacity=".7"/><path d="M1008.500 640v35M1022.500 640v35" stroke="#2a2a2e" stroke-width="1"/>
<ellipse cx="1015.500" cy="638" rx="7.500" ry="2.500" fill="#77777c" stroke="#333" stroke-width=".5"/>
<!-- cylinder base flange -->
<path d="M944.400 662l7-6.500h37l6.200.200-17.800 18.700z" fill="#d8dcea" stroke="#1a1a1a" stroke-width=".9"/>
<!-- cylinder body -->
<path d="M951.200 636v28l25.600 9.400 12-12.400v-30z" fill="url(#gCylI)" stroke="#241e20" stroke-width=".9"/>
<path d="M976.800 643v30.400l12-12.400v-32.500z" fill="#5a5058"/>
<path d="M963 640v28.500M953.500 637v28M974 644v28.500M986.500 632v31" stroke="#2a2426" stroke-width="1.100"/>
<!-- cap block -->
<path d="M947.500 626.400l16.800-14.600 27.100 7.200v9.500l-14.600 14.500-29.300-6.100z" fill="#5a4e48" stroke="#16120f" stroke-width="1"/>
<path d="M947.500 626.400l30.300 10.500 13.600-17.900M977.800 636.900v6" stroke="#16120f" stroke-width="1" fill="none"/>
<path d="M951.500 626l13.500-11.500 22.500 6-10.500 13.500z" fill="#3c3430"/>
<path d="M955 625.500l8.500-7 4 1.200-8 7.200zM979.500 620.500l5 1.500-6.500 8-4-1.500zM961 630l4-3.500 7 2.500-2.500 4z" fill="#6a5e58"/>
<circle cx="958.500" cy="634.500" r="2.100" fill="#a8a0a0" stroke="#0e0c0c" stroke-width=".9"/>
<!-- collar + rod + nut -->
<path d="M966.300 616h10.500v17l-10.500-3z" fill="#54483f" stroke="#1a1614" stroke-width=".6"/>
<rect x="965.300" y="602" width="9" height="15" fill="url(#gNut)" stroke="#1a1a1a" stroke-width=".5"/>
<rect x="963" y="580.500" width="12.300" height="23" rx="2" fill="url(#gNut)" stroke="#1a1a1a" stroke-width=".7"/>
<path d="M963.200 587h12M963.200 600h12" stroke="#1e1e1e" stroke-width=".7"/>
<ellipse cx="969.200" cy="582" rx="5" ry="1.700" fill="#77777c" stroke="#1a1a1a" stroke-width=".6"/>

<!-- lower frame front -->
<path d="M860.200 813.800h8.800v157h-8.800z" fill="#68d200" stroke="#0c1602" stroke-width="1.300"/>
<path d="M866.500 815v156" stroke="#3f8a00" stroke-width=".8"/>
<path d="M868.800 918.800v52h3.500v-51z" fill="#4faa00" stroke="#16280a" stroke-width=".6"/>
<!-- front top beam -->
<path d="M868.800 816.500l107.700 30v8.500l-107.700-29.500z" fill="#68d200" stroke="#0c1602" stroke-width="1.300"/>
<!-- front door -->
<path d="M868.800 825.500l107.700 29.500v83.400l-107.700-28.100z" fill="#1a1a1a"/>
<path d="M870 827.700l105.500 28.800v80.300l-105.500-27.600z" fill="#82868c"/>
<path d="M966.800 885.500l4.200 1v20l-4.200-1z" fill="#c8ccd2" stroke="#111" stroke-width=".9"/>
<!-- beams under door -->
<path d="M868.800 910.300l108.200 28.100v7.600l-108.200-27.200z" fill="#68d200" stroke="#0c1602" stroke-width="1.200"/>
<path d="M868.800 918.800l108.200 27.200v3.500l-108.200-26.500z" fill="#2c4a10" stroke="#16280a" stroke-width=".5"/>
<path d="M870 920.500l106 26.500" stroke="#8ae020" stroke-width=".8" stroke-dasharray="2 1.500"/>
<path d="M868.800 923l108.200 26.500v7.500l-108.200-28z" fill="#5cc000" stroke="#0c1602" stroke-width="1.200"/>
<!-- bottom beam -->
<path d="M868.800 961.400l108.200 25.600v9.300l-108.200-25.500z" fill="#68d200" stroke="#0c1602" stroke-width="1.300"/>
<path d="M868.800 962.800l108.200 25.700" stroke="#b4f830" stroke-width="1.800"/>
<path d="M868.800 966l108.200 25.800" stroke="#16280a" stroke-width="1" stroke-dasharray="2.500 1.500"/>
<!-- corner leg -->
<path d="M976.500 846h13.200v158.500h-13.200z" fill="#68d200" stroke="#0c1602" stroke-width="1.300"/>
<path d="M983 847v157" stroke="#16280a" stroke-width="1"/>
<path d="M981 849v155" stroke="#3f8a00" stroke-width=".8"/>
<path d="M976 953.500h14M859 921h11" stroke="#3f8a00" stroke-width="3.500"/>
<path d="M1050 880h14" stroke="#3f8a00" stroke-width="3"/>
<!-- feet front -->
<ellipse cx="865.800" cy="979" rx="7" ry="4.500" fill="#58b400" stroke="#1c3a06" stroke-width="1"/><ellipse cx="865.800" cy="978" rx="3.500" ry="2" fill="#3c8400"/>
<path d="M860.200 970.800h12v3h-12z" fill="#68d200" stroke="#16280a" stroke-width=".6"/>
<path d="M969 998.500l8 2 12.700 4.500-6 1.500-15-5z" fill="#5ab800" stroke="#284a0a" stroke-width=".6"/>
<!-- triad -->
<path d="M822.300 947l-8 8.500" stroke="#1a1aa8" stroke-width="4"/>
<path d="M808 954.500h6.300l1.700 6-5.700 1.300-2.300-3.800z" fill="#1a1ad0"/>
<path d="M822.300 947l17.200 5.500" stroke="#c81818" stroke-width="4"/>
<path d="M839.200 948.900l9 5.600-9 2.400z" fill="#e84040"/>
<rect x="820.300" y="931.600" width="3.700" height="16" fill="#1e6e22"/>
<path d="M817.300 931.800l4.800-8.800 4 8.800z" fill="#2a9a3a"/>
<text x="820.500" y="921" font-family="Liberation Mono, monospace" font-weight="bold" font-size="11" fill="#128a22" text-anchor="middle" textLength="5.300" lengthAdjust="spacingAndGlyphs">Y</text>
<text x="850.600" y="960.200" font-family="Liberation Mono, monospace" font-weight="bold" font-size="11" fill="#f01010" text-anchor="middle" textLength="5.300" lengthAdjust="spacingAndGlyphs">X</text>
<text x="805.500" y="968" font-family="Liberation Mono, monospace" font-weight="bold" font-size="11" fill="#1414f0" text-anchor="middle" textLength="5.300" lengthAdjust="spacingAndGlyphs">Z</text>
</g>
<g id="misc">
<!-- left-edge triads (X arrows) -->
<rect x="-2" y="501.200" width="8.500" height="3.800" fill="#c81818"/><rect x="-2" y="502.500" width="8" height="1.300" fill="#f07070"/>
<path d="M6 499l9 4-9 4z" fill="#c01414"/>
<text x="17.600" y="507" font-family="Liberation Mono, monospace" font-weight="bold" font-size="11" fill="#f01010" text-anchor="middle" textLength="5.300" lengthAdjust="spacingAndGlyphs">X</text>
<rect x="-2" y="946.200" width="8.500" height="3.800" fill="#c81818"/><rect x="-2" y="947.500" width="8" height="1.300" fill="#f07070"/>
<path d="M6 944l9 4-9 4z" fill="#c01414"/>
<text x="17.600" y="952" font-family="Liberation Mono, monospace" font-weight="bold" font-size="11" fill="#f01010" text-anchor="middle" textLength="5.300" lengthAdjust="spacingAndGlyphs">X</text>
</g>
<g id="hud">
<defs>
<radialGradient id="lens" cx=".4" cy=".35" r=".7"><stop offset="0" stop-color="#f4f6fa"/><stop offset="1" stop-color="#c4c8d0"/></radialGradient>
<linearGradient id="tele" x1="0" y1="0" x2="1" y2="1"><stop offset="0" stop-color="#f0f0f0"/><stop offset="1" stop-color="#8c8c90"/></linearGradient>
<linearGradient id="bcube" x1="0" y1="0" x2="1" y2="1"><stop offset="0" stop-color="#8cc4e4"/><stop offset="1" stop-color="#4a90bc"/></linearGradient>
</defs>
<!-- 1 normal to -->
<path d="M172.700 585l9.300-2.200 9 2.200-9.700 4.800z" fill="#6ab0dc" stroke="#2a78a8" stroke-width=".8"/>
<path d="M182.500 585v-10" stroke="#1a1a1a" stroke-width="1.500"/><path d="M179 576l3.500-4.500 3.500 4.500z" fill="#1a1a1a"/>
<!-- 2 zoom fit -->
<path d="M206.500 583l-6.500 5.500" stroke="#4a9fd0" stroke-width="3" stroke-linecap="round"/>
<circle cx="210.400" cy="578.600" r="6.200" fill="url(#lens)" stroke="#666" stroke-width="1.100"/>
<path d="M210.400 574.500v1.500M210.400 581.200v1.500M206.300 578.600h1.500M213 578.600h1.500" stroke="#333" stroke-width="1.300"/>
<!-- 3 zoom area -->
<rect x="230.500" y="572.500" width="12.500" height="12.500" fill="none" stroke="#333" stroke-width="1.100" stroke-dasharray="2.500 1.500"/>
<path d="M230 583.500l-5 5" stroke="#4a9fd0" stroke-width="3" stroke-linecap="round"/>
<circle cx="234" cy="578.800" r="6.500" fill="url(#lens)" stroke="#777" stroke-width="1.100"/>
<!-- 4 previous view -->
<path d="M252.5 581.500l8-5.500 3.500-4 4.500 3.500-3.500 4.500-5.500 8.500z" fill="url(#tele)" stroke="#707074" stroke-width=".8"/><path d="M260 576.500l4.500 4.500M262 574.500l4.500 4" stroke="#8a8a8e" stroke-width=".7"/><ellipse cx="255.8" cy="585.200" rx="2.600" ry="4.300" transform="rotate(-38 255.8 585.200)" fill="#e8e8ea" stroke="#606064" stroke-width=".8"/><ellipse cx="255.8" cy="585.200" rx="1.300" ry="2.600" transform="rotate(-38 255.8 585.200)" fill="#b4b4b8"/>
<path d="M259.500 585l4.200-3.200v2.200h5.300v2h-5.300v2.200z" fill="#2f86bd"/>
<!-- 5 section -->
<path d="M277 577c0-5 17.500-5 17.500 0v9l-5 3v-9.500c-1.500-2-6-2-7.500 0v9.500l-5-2.500z" fill="#8a8e94" stroke="#333" stroke-width=".8"/>
<path d="M277.500 578.500l4.500 2v8.500l-4.500-2.500zM289.500 580.500l5-2.500v8l-5 3z" fill="#4a9fd0" stroke="#1f5f8a" stroke-width=".6"/>
<path d="M278 583l3.500-2M278 586l3.500-2M290 584.500l4-2.500M290 587.500l4-2.500" stroke="#bfe0f4" stroke-width=".7"/>
<!-- 6 dynamic annotation -->
<path d="M303.5 581.500l8-5.500 3.500-4 4.500 3.500-3.500 4.500-5.500 8.500z" fill="url(#tele)" stroke="#707074" stroke-width=".8"/><path d="M311 576.500l4.500 4.500M313 574.500l4.500 4" stroke="#8a8a8e" stroke-width=".7"/><ellipse cx="306.8" cy="585.200" rx="2.600" ry="4.300" transform="rotate(-38 306.8 585.200)" fill="#e8e8ea" stroke="#606064" stroke-width=".8"/><ellipse cx="306.8" cy="585.200" rx="1.300" ry="2.600" transform="rotate(-38 306.8 585.200)" fill="#b4b4b8"/>
<path d="M305.500 574.500l8.500-2.500-3.500 3.500 3.500.300-9.500 5.200 3-4.300-4 .6z" fill="#f59a20" stroke="#c86000" stroke-width=".5"/>
<text x="316.200" y="590" font-family="Liberation Serif, serif" font-size="12.500" fill="#2a6fa0" text-anchor="middle">A</text>
<!-- 7 view orientation -->
<path d="M329.500 577l5-5h12.500v12.500l-5 5z" fill="#f4f4f4" stroke="#333" stroke-width=".8"/>
<path d="M342 577l5-5M338 572v4.500M346.500 580.500h-4" stroke="#333" stroke-width=".8"/>
<rect x="329.500" y="577" width="12.500" height="12.500" fill="url(#bcube)" stroke="#1f5f8a" stroke-width=".9"/>
<path d="M354.500 580h5l-2.500 3z" fill="#8e9096"/>
<!-- 8 display style -->
<path d="M370.500 574.500l8-3.500 8 2.500v13l-8.500 3.500-7.500-3.500z" fill="#f4f4f4" stroke="#555" stroke-width=".9"/>
<path d="M370.500 574.500l7.500 3v12l-7.500-3.500z" fill="#4a9fd0" stroke="#444" stroke-width=".7"/>
<path d="M378 577.500v12.500l3-1.300v-12z" fill="#9ccbe6"/>
<path d="M370.500 574.500l8-3.500 8 2.500-8.500 4z" fill="#dcecf6" stroke="#555" stroke-width=".6"/>
<path d="M394.700 580h5l-2.500 3z" fill="#8e9096"/>
<!-- 9 hide/show -->
<path d="M409.500 580.500c4-6 13.500-6 17.500 0-4 6-13.500 6-17.500 0z" fill="#d4d6dc" stroke="#8a8c92" stroke-width=".9"/>
<circle cx="418.300" cy="580" r="3.800" fill="#55575c"/>
<path d="M418.300 574v14" stroke="#333" stroke-width=".8"/>
<path d="M435 580h5l-2.500 3z" fill="#8e9096"/>
<!-- 10 edit appearance -->
<circle cx="456.400" cy="578.600" r="7.700" fill="#e8e8e8"/>
<path d="M456.400 578.600v-7.700a7.700 7.700 0 0 1 7.700 7.700z" fill="#e03030"/>
<path d="M456.400 578.600h-7.700a7.700 7.700 0 0 1 7.700-7.700z" fill="#3a7ad8"/>
<path d="M456.400 578.600h7.700a7.700 7.700 0 0 1-7.700 7.700z" fill="#f0c020"/>
<path d="M456.400 578.600v7.700a7.700 7.700 0 0 1-7.700-7.700z" fill="#30b040"/>
<path d="M465 578l3 3-9.500 8.500-3.500 1.500 1-3.500z" fill="#f0c840" stroke="#333" stroke-width=".8"/>
<path d="M465 578l3 3-1.500 1.300-3-3z" fill="#d03030" stroke="#333" stroke-width=".5"/>
<!-- 11 apply scene -->
<rect x="474" y="579" width="19" height="11.600" fill="#222"/>
<g fill="#e8e8e8"><rect x="475.500" y="580.500" width="2.500" height="2.500"/><rect x="481" y="580.500" width="2.500" height="2.500"/><rect x="486.500" y="580.500" width="2.500" height="2.500"/><rect x="476" y="586.500" width="3.500" height="3"/><rect x="482" y="586.500" width="3.500" height="3"/><rect x="488" y="586.500" width="3.500" height="3"/></g>
<circle cx="483" cy="578.600" r="7.700" fill="#e8e8e8"/>
<path d="M483 578.600v-7.700a7.700 7.700 0 0 1 7.700 7.700z" fill="#e03030"/>
<path d="M483 578.600h-7.700a7.700 7.700 0 0 1 7.700-7.700z" fill="#3a7ad8"/>
<path d="M483 578.600h7.700a7.700 7.700 0 0 1-7.700 7.700z" fill="#f0c020"/>
<path d="M483 578.600v7.700a7.700 7.700 0 0 1-7.700-7.700z" fill="#30b040"/>
<path d="M500.800 580h5l-2.500 3z" fill="#8e9096"/>
<!-- 12 monitor -->
<rect x="515.500" y="573.500" width="17" height="11.500" fill="#e0e0e2" stroke="#444" stroke-width="1"/>
<path d="M524 585v3M520.500 588.500h7" stroke="#333" stroke-width="1.300"/>
<path d="M540.800 580h5l-2.500 3z" fill="#8e9096"/>
</g>
</svg><!--VP-END-->
<!-- splitters -->
<div class="abs" style="left:779px;top:118px;width:1px;height:887px;background:#666a96"></div>
<div class="abs" style="left:780px;top:118px;width:2px;height:887px;background:#fcfcfc"></div>
<div class="abs" style="left:782px;top:118px;width:1px;height:887px;background:#3c4050"></div>
<div class="abs" style="left:0;top:561px;width:1291px;height:1px;background:#666a96"></div>
<div class="abs" style="left:0;top:562px;width:1291px;height:2px;background:#fcfcfc"></div>
<div class="abs" style="left:0;top:564px;width:1291px;height:1px;background:#3c4050"></div>

<div id="titlebar" class="abs"></div>
<div id="titleline" class="abs"></div>
<div id="ribbon" class="abs"></div>
<div id="ribline" class="abs"></div>
<div id="title" class="abs">轴承压装总装<span style="font-size:11.5px;letter-spacing:-0.08px">2013-11-1 *</span></div>

<!-- ribbon labels -->
<div class="rb" style="left:10px;top:68px">剖面属<br>性</div>
<div class="rb" style="left:58px;top:68px">传感器</div>
<div class="rb" style="left:107px;top:68px">装配体<br>直观</div>
<div class="rb" style="left:156px;top:68px">性能评<br>估</div>
<div class="vsep" style="left:182px"></div>
<div class="rb" style="left:202px;top:68px">曲率</div>
<div class="rb" style="left:244px;top:68px">对称检<br>查</div>
<div class="vsep" style="left:270px"></div>
<div class="rb" style="left:296px;top:68px">比较文<br>档</div>
<div class="rb" style="left:352px;top:61px">检查激活<br>的文档</div>
<div class="vsep" style="left:384px"></div>
<div class="rb en dis" style="left:428.5px;top:70px"><span style="font-size:11px;letter-spacing:-0.83px">3DEXPERIENCE</span><br><span style="letter-spacing:0.07px">Simulation</span><br><span style="letter-spacing:0.06px">Connector</span></div>
<div class="rb en" style="left:519px;top:70px"><span style="letter-spacing:-0.16px">SimulationXpress</span><span class="cn">分析向导</span></div>
<div class="rb en" style="left:598px;top:70px"><span style="letter-spacing:-0.42px">FloXpress</span><span class="cn">分析向<br>导</span></div>
<div class="rb en" style="left:679px;top:70px"><span style="letter-spacing:-0.22px">DriveWorksXpress</span><span class="cn">向导</span></div>
<div class="rb en" style="left:757px;top:70px"><span style="letter-spacing:0.07px">Costing</span></div>
<div class="rb en" style="left:838px;top:70px"><span style="letter-spacing:0.05px">Sustainability</span></div>

<!-- tabs -->
<div class="tab" style="left:0;width:39px;padding-left:0"><span style="position:absolute;left:-4px">S</span><span style="position:absolute;left:5px;font-size:13px;letter-spacing:0">插件</span></div>
<div class="tab" style="left:39px;width:117px;padding-left:8px">SOLIDWORKS MBD</div>

<!-- view labels -->
<div class="vl" style="right:1278.800px;top:544px"><span class="st">*</span>前视</div>
<div class="vl" style="left:819px;top:544px"><span class="st">*</span>左视</div>
<div class="vl" style="right:1278.800px;top:989px"><span class="st">*</span>上视</div>
<div class="vl" style="left:798px;top:989px"><span class="st">*</span>上下二等角轴测</div>

<!-- bottom -->
<div id="bot1" class="abs"></div>
<div id="bot2" class="abs"></div>
<div id="bot3" class="abs"></div>
<div id="status" class="abs"><span class="abs" style="right:1229.200px;top:2px;white-space:nowrap;letter-spacing:.8px">&lt;1&gt;/02-08-</span><span class="abs" style="left:81px;top:2px;white-space:nowrap">.STEP&lt;3&gt;</span><span class="abs" style="left:1280px;top:1px;font-size:13px;white-space:nowrap">完成</span></div>
<div class="abs" style="left:0;top:1039px;width:1291px;height:1px;background:#f4f4f4"></div><div id="taskbar" class="abs"></div>
<!--CHROME-START--><svg width="1291" height="130" viewBox="0 0 1291 130">
<defs>
<linearGradient id="rb1" x1="0" y1="0" x2="1" y2="0"><stop offset="0" stop-color="#00c8ff"/><stop offset=".3" stop-color="#00e060"/><stop offset=".6" stop-color="#e8f000"/><stop offset="1" stop-color="#ff2000"/></linearGradient>
<linearGradient id="cv1" x1=".9" y1="0" x2=".3" y2="1"><stop offset="0" stop-color="#d8f020"/><stop offset=".18" stop-color="#20e050"/><stop offset=".36" stop-color="#00c8f0"/><stop offset=".55" stop-color="#2848ff"/><stop offset=".75" stop-color="#e020d8"/><stop offset="1" stop-color="#e01010"/></linearGradient>
<radialGradient id="glob" cx=".4" cy=".35" r=".7"><stop offset="0" stop-color="#7fb8d8"/><stop offset="1" stop-color="#2a6f98"/></radialGradient>
</defs>
<!-- title bar: small arrows -->
<g fill="#222">
<path d="M-2 14h4l-2 2.5z"/>
<path d="M35.5 14h5l-2.5 3z"/>
<path d="M75 14h5l-2.5 3z"/>
<path d="M244 14h5l-2.5 3z"/>
</g>
<path d="M113.5 14h5l-2.5 3z" fill="#9a9a9a"/>
<!-- save -->
<g>
<path d="M10.5 8.5a1.5 1.5 0 0 1 1.5-1.5h14.5a1.5 1.5 0 0 1 1.500 1.5v14.500a1.500 1.500 0 0 1-1.500 1.500h-13l-3-2.500z" fill="#2f86bd" stroke="#1b4f72" stroke-width="1"/>
<rect x="13.500" y="7.500" width="11" height="8" fill="#f4f4f4" stroke="#1b4f72" stroke-width=".8"/>
<path d="M15 10h8M15 12h8M15 14h8" stroke="#8a8a8a" stroke-width=".6"/>
<rect x="14.500" y="18" width="10" height="6.500" fill="#3a3a3a"/>
<rect x="16" y="19" width="3" height="5" fill="#9aa"/>
</g>
<!-- printer -->
<g>
<rect x="53" y="7" width="10" height="8" fill="#fafafa" stroke="#888" stroke-width=".8"/>
<path d="M50 15.500a2 2 0 0 1 2-2h12a2 2 0 0 1 2 2v5.500h-16z" fill="#3b8fc4" stroke="#1b4f72" stroke-width=".9"/>
<rect x="49.500" y="17" width="17" height="2" fill="#1b4f72"/>
<path d="M52 20.500h12l1.500 4h-15z" fill="#f4f4f4" stroke="#777" stroke-width=".8"/>
<path d="M53 23.500h10" stroke="#333" stroke-width="1"/>
</g>
<!-- undo (disabled) -->
<path d="M89 11l5.500-3.500v3c6 0 10 3 10 7 0 3-2 5-4.500 6 1.500-1.500 2-3 2-4.500 0-2.500-2.500-4.500-7.500-4.500v3z" fill="#c6c6c6" stroke="#b0b0b0" stroke-width=".6"/>
<!-- select box -->
<rect x="124.500" y="3.500" width="38" height="25" fill="#e9e9e9" stroke="#7d7d7d" stroke-width="1"/>
<rect x="125" y="4" width="24" height="24" fill="#bdbdbd"/>
<path d="M130.500 6.500v15l3.700-3.300 2.600 5.600 2.400-1.100-2.600-5.500h5z" fill="#fff" stroke="#111" stroke-width="1" stroke-linejoin="miter"/>
<path d="M153 14h5l-2.500 3z" fill="#222"/>
<!-- traffic light -->
<rect x="171" y="6.500" width="10" height="18.500" rx="5" fill="#2a2a2a" stroke="#111" stroke-width=".6"/>
<circle cx="176" cy="11.500" r="3" fill="#e22"/>
<circle cx="176" cy="20" r="3" fill="#2a2"/>
<path d="M174.800 11.500h2.400M176 10.300v2.400M174.800 20h2.400M176 18.800v2.400" stroke="#fff" stroke-width=".7" opacity=".8"/>
<!-- list -->
<rect x="194.500" y="7.500" width="15" height="17" fill="#fff" stroke="#222" stroke-width="1"/>
<g fill="#2a7ab8" stroke="#174a70" stroke-width=".5"><rect x="196.500" y="9.500" width="3.500" height="3"/><rect x="196.500" y="14.500" width="3.500" height="3"/><rect x="196.500" y="19.500" width="3.500" height="3"/></g>
<path d="M201.500 11h6M201.500 16h6M201.500 21h6" stroke="#222" stroke-width="1"/>
<!-- gear -->
<g transform="translate(227 15.500)">
<path d="M-1.400-8h2.800l.5 2.100 1.700.7 1.900-1.200 2 2-1.200 1.900.7 1.700 2.100.5v2.800l-2.100.5-.7 1.700 1.200 1.900-2 2-1.900-1.200-1.700.7-.5 2.100h-2.800l-.5-2.100-1.700-.7-1.900 1.200-2-2 1.200-1.900-.7-1.700-2.100-.5v-2.800l2.100-.5.7-1.700-1.200-1.900 2-2 1.900 1.200 1.700-.7z" fill="#f4f4f4" stroke="#333" stroke-width="1"/>
<circle r="2.800" fill="#e6e6e6" stroke="#333" stroke-width="1"/>
</g>
<!-- help box -->
<rect x="1269.500" y="4.500" width="30" height="22" fill="#ececec" stroke="#111" stroke-width="1"/>
<circle cx="1283" cy="15.500" r="7.500" fill="#fff" stroke="#333" stroke-width="1"/>
<text x="1283" y="20.300" font-family="Liberation Sans, sans-serif" font-weight="bold" font-size="13" fill="#1f6fa5" text-anchor="middle">?</text>

<!-- ribbon icons -->
<!-- 1 section props -->
<path d="M1.500 54.500l15-4v13l-15 4z" fill="#f2f2f2" stroke="#333" stroke-width="1"/>
<path d="M6.500 62l4.500-1 1.500-5.500" fill="none" stroke="#111" stroke-width="1.700"/>
<path d="M4 62.800l3.500-3v5zM12.500 51.800l2.800 4h-5.300z" fill="#111"/>
<!-- 2 sensor gauge -->
<circle cx="57.500" cy="58.500" r="8.200" fill="#f6f6f6" stroke="#555" stroke-width="1.300"/>
<path d="M57.500 52v2M52 54.500l1.300 1.200M50.800 58.500h2M52 63.500l1.400-1.200" stroke="#222" stroke-width="1"/>
<path d="M58 59l4.200-5.400" stroke="#2a7ab8" stroke-width="2.200" stroke-linecap="round"/>
<path d="M65.500 57v6l-4.500-2.500z" fill="#e81010"/>
<!-- 3 assembly viz -->
<path d="M100.500 55.500l5-3 5 2v9l-5 2.500-5-2z" fill="#f0c030" stroke="#a07810" stroke-width=".8"/>
<path d="M106.500 60l4.500 2 5-2.300v5.500l-5 2.500-4.500-2z" fill="#f4d040" stroke="#a07810" stroke-width=".8"/>
<path d="M111 62v5.500" stroke="#a07810" stroke-width=".7"/>
<path d="M106.500 53.500l5-2.500 4.500 2v6.500l-5 2.500-4.500-2z" fill="#7ec3e6" stroke="#2a6f98" stroke-width=".8"/>
<path d="M106.500 53.500l4.500 2 5-2.300M111 55.500v6.500" stroke="#2a6f98" stroke-width=".7" fill="none"/>
<rect x="98.500" y="59.500" width="7" height="8" fill="#fff" stroke="#444" stroke-width=".9"/>
<path d="M100 62h3.500M100 64h4M100 66h3" stroke="#2a7ab8" stroke-width=".8"/>
<!-- 4 performance -->
<rect x="147.500" y="50" width="9" height="17" rx="4.500" fill="#2a2a2a"/>
<circle cx="152" cy="54.500" r="2.800" fill="#e22"/><circle cx="151.500" cy="62.500" r="2.800" fill="#3a3"/>
<circle cx="158.500" cy="62" r="4.800" fill="#f4f4f4" stroke="#1f5f8a" stroke-width="1.300"/>
<path d="M158.500 59v3.200l2 1.500" stroke="#111" stroke-width="1" fill="none"/>
<path d="M155 55.500c2-1.500 6-1.500 8.500.5M163.500 54v2.500h-2.500" stroke="#1f5f8a" stroke-width="1.100" fill="none"/>
<!-- 5 curvature -->
<rect x="193.500" y="50.500" width="17" height="16.500" rx="1" fill="url(#cv1)" stroke="#222" stroke-width="1"/>
<!-- 6 symmetry -->
<path d="M239 49.500l7 4.500v13l-7-3z" fill="#f0f0f0" stroke="#333" stroke-width=".9"/>
<path d="M240.500 55l-5.500 11.500 6 .5z" fill="#4a9fd0" stroke="#1f5f8a" stroke-width=".8"/>
<path d="M249.500 53l4 9.500-5 3z" fill="#e4e4e4" stroke="#777" stroke-width=".8"/>
<!-- 7 compare docs -->
<path d="M287.500 50.500h6.500l3 3v9h-9.500z" fill="#fafafa" stroke="#333" stroke-width="1"/>
<path d="M292.500 54.500h8l4 3.500v9.500h-12z" fill="#fafafa" stroke="#333" stroke-width="1"/>
<path d="M289.500 60h6M289.500 62.500h6" stroke="#111" stroke-width="1.300"/>
<text x="299.800" y="66.500" font-family="Liberation Sans, sans-serif" font-weight="bold" font-size="11" fill="#1f6fa5" text-anchor="middle">?</text>
<!-- 8 check active doc -->
<circle cx="347.500" cy="52" r="5.200" fill="#f2f2f2" stroke="#444" stroke-width="1"/>
<path d="M344.500 52l2.200 2.300 4-4.300" stroke="#1a9a1a" stroke-width="1.800" fill="none"/>
<path d="M351.500 48.500l3.500-2M352 55.500l3 2.500" stroke="#222" stroke-width="1.200"/>
<path d="M355.500 45.500l1.500 1.500 3.500-3.500" stroke="#1a9a1a" stroke-width="1.600" fill="none"/>
<path d="M356 56.500l4 4M360 56.500l-4 4" stroke="#e01010" stroke-width="1.500"/>
<path d="M349.500 102.500h5l-2.500 3z" fill="#222"/>
<!-- 9 3dexperience disabled -->
<g fill="#d9d9d9" stroke="#c4c4c4" stroke-width=".8">
<rect x="419" y="62.500" width="17" height="5" rx="1"/>
<path d="M421 54l5-3 5 2.500v6l-5 2.500-5-2.500z"/>
<path d="M431 51c3 0 5 2 5 4.500l1.200-.5-2 3-2-2.500 1.300.3c0-1.500-1.500-3-3.500-3z"/>
</g>
<!-- 10 simulationxpress -->
<path d="M513 56c4-5 10-6 15-3l2 14-4-2c-3-4-8-5-12-4z" fill="url(#rb1)" stroke="#333" stroke-width=".7"/>
<path d="M527.500 50v4M526 52.500l1.500 2 1.500-2" stroke="#111" stroke-width="1.200" fill="none"/>
<path d="M511 52.500l3 2M510.500 55.500l3 2M511 58.500l2.500 1.500" stroke="#222" stroke-width=".8"/>
<circle cx="518.500" cy="59.500" r="3.800" fill="#cfe4f2" stroke="#444" stroke-width="1"/>
<path d="M515.500 62.500l-4 4" stroke="#1f6fa5" stroke-width="2.200" stroke-linecap="round"/>
<!-- 11 floxpress -->
<path d="M593.500 55l8-3.500 2.500 1v10l-8 3.500-2.500-1z" fill="#f3f3f3" stroke="#555" stroke-width=".9"/>
<path d="M596 56.500l5.500-2.500M596 58.500l5.500-2.500M596 60.500l5.500-2.500M596 62.500l5.500-2.500M596 64.500l5.500-2.500" stroke="#e03020" stroke-width=".7"/>
<path d="M588 60h5M588 62.500h5M588 65h5" stroke="#2a80e0" stroke-width=".9"/>
<path d="M591 58h3M591 60.500h3" stroke="#20b040" stroke-width=".8"/>
<path d="M603 53h4M603 55.500h4M603 58h4M605.500 51v8" stroke="#2a80e0" stroke-width=".9"/>
<!-- 12 driveworks -->
<rect x="672.700" y="51" width="9.700" height="9.700" fill="#1e2a6e"/>
<rect x="675.500" y="56.600" width="9.700" height="10.100" fill="#d0112b"/>
<!-- 13 costing -->
<g fill="#c9c9c9" stroke="#555" stroke-width=".9">
<ellipse cx="757.500" cy="63" rx="7" ry="2.800"/>
<ellipse cx="758" cy="60" rx="7" ry="2.800"/>
<ellipse cx="757.500" cy="57" rx="7" ry="2.800"/>
<ellipse cx="758" cy="54" rx="7" ry="2.800"/>
<ellipse cx="750.500" cy="60.500" rx="2.800" ry="5.500" transform="rotate(25 750.500 60.500)"/>
</g>
<!-- 14 sustainability -->
<circle cx="839" cy="58.800" r="9" fill="url(#glob)" stroke="#1f5f8a" stroke-width=".6"/>
<path d="M839 54.300l4.500 4.500-4.500 4.500-4.500-4.500z" fill="#f7f7f7"/>
<path d="M839 49.800v4.500M839 63.300v4.500M830 58.800h4.500M843.500 58.800h4.500" stroke="#f7f7f7" stroke-width="1.600"/>
</svg>
<!--CHROME-END-->
</div>
</body>
</html>
